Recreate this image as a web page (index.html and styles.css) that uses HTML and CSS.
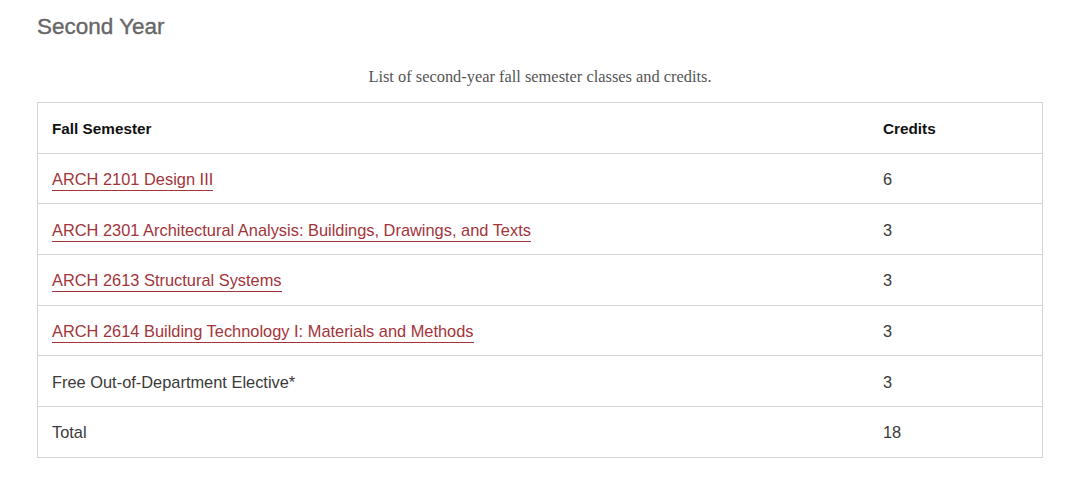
FILE: index.html
```html
<!DOCTYPE html>
<html>
<head>
<meta charset="utf-8">
<link rel="stylesheet" href="styles.css">
</head>
<body>
<div class="page">
  <h2 class="title">Second Year</h2>
  <table class="courses">
    <caption>List of second-year fall semester classes and credits.</caption>
    <thead>
      <tr><th class="c1">Fall Semester</th><th class="c2">Credits</th></tr>
    </thead>
    <tbody>
      <tr><td><a href="#">ARCH 2101 Design III</a></td><td>6</td></tr>
      <tr><td><a href="#">ARCH 2301 Architectural Analysis: Buildings, Drawings, and Texts</a></td><td>3</td></tr>
      <tr><td><a href="#">ARCH 2613 Structural Systems</a></td><td>3</td></tr>
      <tr><td><a href="#">ARCH 2614 Building Technology I: Materials and Methods</a></td><td>3</td></tr>
      <tr><td>Free Out-of-Department Elective*</td><td>3</td></tr>
      <tr><td>Total</td><td>18</td></tr>
    </tbody>
  </table>
</div>
</body>
</html>
```

FILE: styles.css
```css
html, body {
  margin: 0;
  padding: 0;
  background: #fff;
}
.page {
  padding: 14px 37px 0 37px;
  width: 1006px;
  font-family: "Liberation Sans", Arial, sans-serif;
}
.title {
  margin: 0;
  font-size: 22.5px;
  font-weight: normal;
  color: #666;
  line-height: 25px;
  -webkit-text-stroke: 0.35px #666;
}
.courses {
  width: 1006px;
  border-collapse: collapse;
  border: 1px solid #d4d4d4;
}
.courses caption {
  font-family: "Liberation Serif", "Times New Roman", serif;
  font-size: 16.4px;
  color: #555;
  padding: 28px 0 15px 0;
  line-height: 20px;
}
.courses th, .courses td {
  text-align: left;
  height: 47.7px;
  padding: 2px 0 0 14px;
  border-bottom: 1px solid #d4d4d4;
  font-size: 16.4px;
  color: #3a3a3a;
  vertical-align: middle;
}
.courses th {
  font-size: 15.3px;
  font-weight: bold;
  color: #111;
}
.courses th.c2 {
  width: 159px;
}
.courses a {
  color: #a3343a;
  text-decoration: none;
  border-bottom: 1px solid #a3343a;
  padding-bottom: 2px;
}
```
